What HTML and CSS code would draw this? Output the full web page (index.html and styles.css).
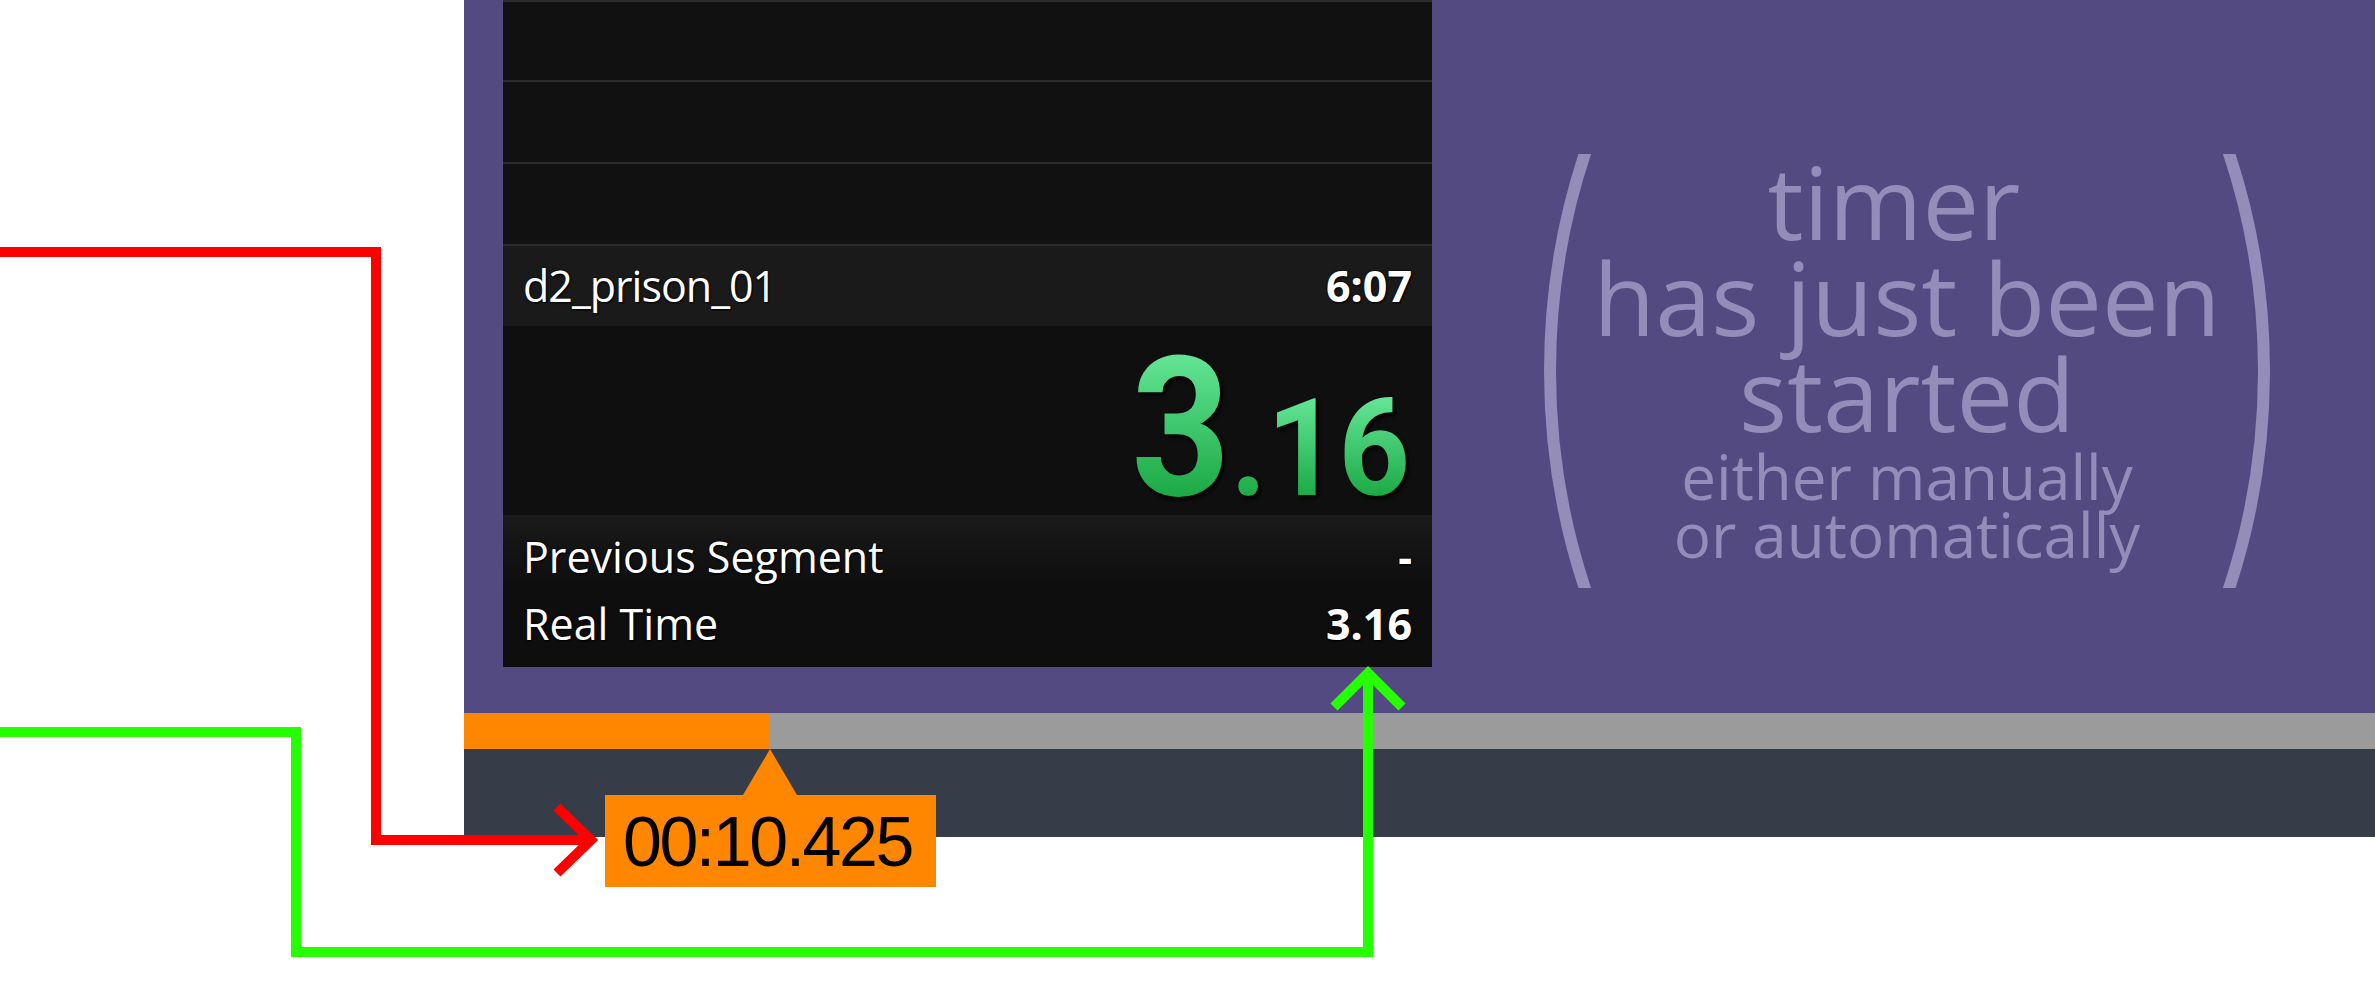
FILE: index.html
```html
<!DOCTYPE html>
<html lang="en">
<head>
<meta charset="utf-8">
<title>Timer started</title>
<link rel="stylesheet" href="styles.css">
</head>
<body>
<div class="page">
  <div class="app">
    <div class="stage">
      <div class="splits">
        <div class="split-row first"></div>
        <div class="split-row"></div>
        <div class="split-row"></div>
        <div class="split-row current">
          <span class="name name-seg">d2_prison_01</span>
          <span class="val">6:07</span>
        </div>
        <div class="timer">
          <span class="t-big">3</span><span class="t-small">.16</span>
        </div>
        <div class="info prev">
          <span class="name">Previous Segment</span>
          <span class="val">-</span>
        </div>
        <div class="info real">
          <span class="name">Real Time</span>
          <span class="val">3.16</span>
        </div>
      </div>
      <div class="note">
        <div class="paren left"></div>
        <div class="note-text">
          <p class="big">timer&nbsp;<br>has just been<br>started</p>
          <p class="small">either manually<br>or automatically</p>
        </div>
        <div class="paren right"></div>
      </div>
    </div>
    <div class="progress">
      <div class="progress-fill"></div>
      <div class="progress-rest"></div>
    </div>
    <div class="footer">
      <div class="tooltip">00:10.425</div>
    </div>
  </div>
</div>
<svg class="arrows" width="2375" height="1000" viewBox="0 0 2375 1000">
  <g fill="none" stroke-width="10" stroke-linecap="butt" stroke-linejoin="miter">
    <path stroke="#ff0000" d="M0 252 H376 V840 H588"/>
    <path stroke="#ff0000" d="M557 807 L591 840 L557 873"/>
    <path stroke="#26ff00" d="M0 732 H296 V952 H1368 V674"/>
    <path stroke="#26ff00" d="M1334 707 L1368 673 L1402 707"/>
  </g>
</svg>
</body>
</html>
```

FILE: styles.css
```css
html, body {
  margin: 0;
  padding: 0;
}

body {
  width: 2375px;
  height: 1000px;
  overflow: hidden;
  background: #ffffff;
  position: relative;
  font-family: "Open Sans", "Noto Sans", sans-serif;
}

.page {
  padding-left: 464px;
}

.app {
  width: 1911px;
}

.stage {
  display: flex;
  height: 713px;
  background: #544a82;
}

/* ---------- splits panel ---------- */
.splits {
  width: 929px;
  height: 667px;
  margin-left: 39px;
  background: #111111;
  display: flex;
  flex-direction: column;
  flex: none;
  color: #ffffff;
  font-size: 43px;
}

.split-row {
  height: 80px;
  border-bottom: 2px solid #2b2b2b;
  background: #111111;
  flex: none;
}

.split-row.first {
  height: 78px;
  border-top: 2px solid #2b2b2b;
}

.split-row.current {
  height: 80px;
  border-bottom: 0;
  background: #1a1a1a;
  display: flex;
  justify-content: space-between;
  align-items: flex-start;
  padding: 0 20px;
  line-height: 80px;
}

.name,
.val {
  text-shadow: 1px 1px 2px #000000, 0 0 2px #000000;
  white-space: nowrap;
}

.name-seg {
  letter-spacing: -1px;
}

.val {
  font-weight: 700;
}

.timer {
  height: 181px;
  padding-top: 8px;
  padding-right: 22px;
  flex: none;
  background: #0f0f0f;
  text-align: right;
  font-family: Roboto, "Open Sans", sans-serif;
  font-weight: 700;
  font-size: 194px;
  line-height: 189px;
  white-space: nowrap;
}

.t-big,
.t-small {
  display: inline-block;
  color: transparent;
  -webkit-background-clip: text;
  background-clip: text;
  filter: drop-shadow(3px 3px 2px rgba(0, 0, 0, 0.9));
  transform-origin: 100% 100%;
}

.t-big {
  line-height: 189px;
  margin-right: -18px;
  transform: scaleX(0.89);
  background-image: linear-gradient(to bottom, #6ae89c 0, #62e494 23px, #1caa45 161px, #1caa45 100%);
}

.t-small {
  font-size: 135px;
  line-height: 135px;
  margin-left: 4px;
  transform: scaleX(0.925);
  background-image: linear-gradient(to bottom, #6ae89c 0, #62e494 18px, #1caa45 114px, #1caa45 100%);
}

.info {
  display: flex;
  justify-content: space-between;
  align-items: flex-start;
  padding: 0 20px;
  line-height: 67px;
  flex: none;
}

.info.prev {
  height: 67px;
  padding-top: 8px;
  background: linear-gradient(to bottom, #1b1b1b 0, #151515 25px, #0e0e0e 100%);
}

.info.real {
  height: 67px;
  padding-bottom: 10px;
  background: #0e0e0e;
}

/* ---------- annotation ---------- */
.note {
  flex: 1;
  display: flex;
  justify-content: center;
  align-items: flex-start;
  padding-left: 7px;
  color: #948dba;
}

.paren {
  width: 48px;
  height: 434px;
  margin-top: 154px;
  overflow: hidden;
  position: relative;
  flex: none;
}

.paren::before {
  content: "";
  position: absolute;
  top: 50%;
  width: 1400px;
  height: 1400px;
  margin-top: -700px;
  box-sizing: border-box;
  border: 12px solid #948dba;
  border-radius: 50%;
}

.paren.left::before {
  left: 0;
}

.paren.right::before {
  right: 0;
}

.note-text {
  width: 630px;
  flex: none;
  text-align: center;
  margin-top: 153px;
  white-space: nowrap;
}

.note-text p {
  margin: 0;
}

.note-text .big {
  font-size: 101px;
  line-height: 96px;
}

.note-text .small {
  margin-top: 6px;
  font-size: 62px;
  line-height: 58px;
}

/* ---------- progress + footer ---------- */
.progress {
  display: flex;
  height: 36px;
}

.progress-fill {
  width: 306px;
  background: #ff8700;
}

.progress-rest {
  flex: 1;
  background: #9b9b9b;
}

.footer {
  height: 88px;
  background: #363d48;
  position: relative;
}

.tooltip {
  position: absolute;
  left: 141px;
  top: 46px;
  width: 313px;
  height: 89px;
  padding: 3px 0 0 18px;
  background: #ff8700;
  color: #000000;
  font-family: "Liberation Sans", Arial, sans-serif;
  font-size: 70px;
  letter-spacing: -2.5px;
  line-height: 89px;
  white-space: nowrap;
}

.tooltip::before {
  content: "";
  position: absolute;
  left: 165px;
  top: -46px;
  margin-left: -27px;
  border-left: 27px solid transparent;
  border-right: 27px solid transparent;
  border-bottom: 46px solid #ff8700;
}

.arrows {
  position: absolute;
  top: 0;
  left: 0;
  pointer-events: none;
}
```
